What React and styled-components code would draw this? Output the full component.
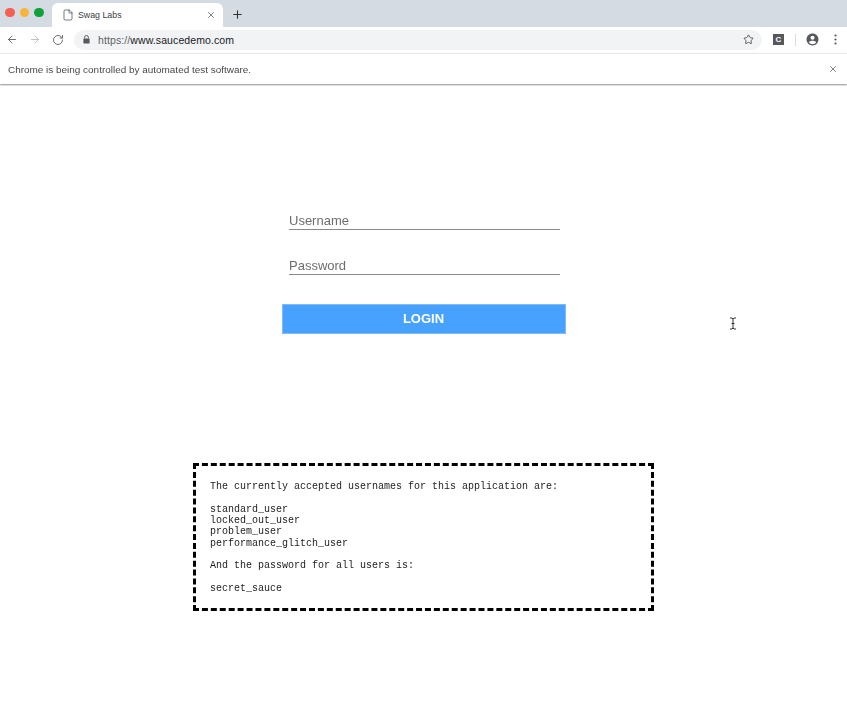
import React from "react";
import styled, { createGlobalStyle } from "styled-components";
import { ArrowLeft, ArrowRight, RotateCw, Star, X, Plus, File } from "lucide-react";

const GlobalStyle = createGlobalStyle`
    html, body {
        margin: 0;
        padding: 0;
        background-color: #ffffff;
    }
    body {
        font-family: "Liberation Sans", Arial, sans-serif;
    }
`

const Page = styled.div`
    position: relative;
    width: 847px;
    height: 715px;
    overflow: hidden;
    display: flex;
    flex-direction: column;
    filter: blur(0.3px);
`

const TabStrip = styled.div`
    display: flex;
    align-items: flex-end;
    height: 27px;
    background-color: #d5dbe2;
`
const Lights = styled.div`
    display: flex;
    gap: 5px;
    align-self: flex-start;
    margin: 7.5px 0 0 5px;
    width: 47px;
`
const Light = styled.span`
    width: 9.5px;
    height: 9.5px;
    border-radius: 50%;
    background-color: ${(props) => props.color};
`
const Tab = styled.div`
    display: flex;
    align-items: center;
    width: 171px;
    height: 24px;
    padding: 0 7px 0 10px;
    box-sizing: border-box;
    border-radius: 6px 6px 0 0;
    background-color: #ffffff;
    color: #3c4043;
    font-size: 8.8px;
`
const TabTitle = styled.span`
    flex: 1;
    margin-left: 4px;
`
const NewTab = styled.div`
    display: flex;
    align-self: center;
    margin: 2px 0 0 8px;
    color: #2f3236;
`

const Toolbar = styled.div`
    display: flex;
    align-items: center;
    height: 25px;
    padding: 0 7px 0 6px;
    background-color: #ffffff;
`
const NavButton = styled.div`
    display: flex;
    width: 12px;
    margin-right: ${(props) => props.gap}px;
    color: ${(props) => props.color};
`
const AddressBar = styled.div`
    display: flex;
    align-items: center;
    width: 688px;
    height: 20px;
    margin-left: 10px;
    padding: 0 8px 0 9px;
    box-sizing: border-box;
    border-radius: 10px;
    background-color: #f1f3f4;
    font-size: 10.5px;
`
const Url = styled.div`
    flex: 1;
    margin-left: 8px;
    color: #5f6368;
    letter-spacing: 0.1px;
`
const Host = styled.span`
    color: #202124;
`
const ExtensionIcon = styled.div`
    display: flex;
    align-items: center;
    justify-content: center;
    width: 11px;
    height: 11px;
    margin-left: 11px;
    background-color: #55585c;
    color: #ffffff;
    font-size: 8px;
    font-weight: bold;
`
const Divider = styled.div`
    width: 1px;
    height: 12px;
    margin: 0 10px 0 11px;
    background-color: #dadce0;
`
const MenuDots = styled.svg`
    margin-left: 15px;
`

const InfoBar = styled.div`
    display: flex;
    align-items: center;
    justify-content: space-between;
    height: 31px;
    margin-top: 1px;
    padding: 0 9px 0 8px;
    border-top: 1px solid #e8eaed;
    box-sizing: border-box;
    background-color: #ffffff;
    box-shadow: 0 1px 1.5px #8d8f91;
    color: #45484c;
    font-size: 9.95px;
`
const CloseBar = styled.div`
    display: flex;
    color: #55585c;
`

const Content = styled.main`
    display: flex;
    flex-direction: column;
    align-items: center;
    padding-top: 126px;
`
const LoginForm = styled.form`
    display: flex;
    flex-direction: column;
    align-items: center;
    width: 284px;
`
const Field = styled.input`
    width: 271px;
    height: 20px;
    margin: 0 0 25px 2px;
    padding: 2px 0 0 0;
    box-sizing: border-box;
    border: none;
    border-bottom: 1px solid #8a8a8a;
    border-radius: 0;
    outline: none;
    background: transparent;
    font-family: "Liberation Sans", Arial, sans-serif;
    font-size: 13px;

    &::placeholder {
        color: #6e6e6e;
        opacity: 1;
    }
`
const LoginButton = styled.button`
    width: 284px;
    height: 30px;
    margin-top: 4px;
    padding: 0 0 2px;
    border: 1px solid #7fbcf5;
    background-color: #47a1ff;
    color: #ffffff;
    font-family: "Liberation Sans", Arial, sans-serif;
    font-size: 13px;
    font-weight: bold;
`

const Credentials = styled.pre`
    width: 461px;
    height: 148px;
    margin: 129px 0 0;
    padding: 15px 0 0 14px;
    box-sizing: border-box;
    border: 3px dashed #000000;
    color: #1c1c1c;
    font-family: "Liberation Mono", "Courier New", monospace;
    font-size: 10px;
    line-height: 11.35px;
`

const TextCursor = styled.svg`
    position: absolute;
    left: 729px;
    top: 317px;
`

const credentials = `The currently accepted usernames for this application are:

standard_user
locked_out_user
problem_user
performance_glitch_user

And the password for all users is:

secret_sauce`

function App() {
    return (
        <Page>
            <GlobalStyle />
            <TabStrip>
                <Lights>
                    <Light color="#f4604f" />
                    <Light color="#f6b53a" />
                    <Light color="#12a03c" />
                </Lights>
                <Tab>
                    <File size={12} strokeWidth={1.6} color="#55585c" />
                    <TabTitle>Swag Labs</TabTitle>
                    <X size={10} strokeWidth={1.8} color="#55585c" />
                </Tab>
                <NewTab>
                    <Plus size={13} strokeWidth={2} />
                </NewTab>
            </TabStrip>
            <Toolbar>
                <NavButton color="#55585c" gap={11}><ArrowLeft size={13} strokeWidth={1.7} /></NavButton>
                <NavButton color="#b4b7bb" gap={11}><ArrowRight size={13} strokeWidth={1.7} /></NavButton>
                <NavButton color="#55585c" gap={0}><RotateCw size={12} strokeWidth={1.7} /></NavButton>
                <AddressBar>
                    <svg width="7" height="9" viewBox="0 0 7 9">
                        <path d="M1.6 3.5V2.4a1.9 1.9 0 0 1 3.8 0v1.1" fill="none" stroke="#55585c" strokeWidth="1" />
                        <rect x="0.4" y="3.5" width="6.2" height="5" rx="0.6" fill="#55585c" />
                    </svg>
                    <Url>https://<Host>www.saucedemo.com</Host></Url>
                    <Star size={11} strokeWidth={1.8} color="#45484c" />
                </AddressBar>
                <ExtensionIcon>C</ExtensionIcon>
                <Divider />
                <svg width="13" height="13" viewBox="0 0 24 24">
                    <path fill="#55585c" d="M12 1C5.9 1 1 5.9 1 12s4.9 11 11 11 11-4.9 11-11S18.1 1 12 1zm0 4a3.8 3.8 0 1 1 0 7.6A3.8 3.8 0 0 1 12 5zm0 15.6c-2.9 0-5.4-1.4-6.9-3.6 1-1.8 4.6-2.8 6.9-2.8s5.9 1 6.9 2.800c-1.500 2.200-4 3.600-6.900 3.600z" />
                </svg>
                <MenuDots width="3" height="11" viewBox="0 0 3 11">
                    <circle cx="1.5" cy="1.5" r="1.1" fill="#55585c" />
                    <circle cx="1.5" cy="5.5" r="1.1" fill="#55585c" />
                    <circle cx="1.5" cy="9.5" r="1.1" fill="#55585c" />
                </MenuDots>
            </Toolbar>
            <InfoBar>
                Chrome is being controlled by automated test software.
                <CloseBar><X size={10} strokeWidth={1.8} /></CloseBar>
            </InfoBar>
            <Content>
                <LoginForm>
                    <Field placeholder="Username" />
                    <Field placeholder="Password" />
                    <LoginButton type="button">LOGIN</LoginButton>
                </LoginForm>
                <Credentials>{credentials}</Credentials>
            </Content>
            <TextCursor width="8" height="13" viewBox="0 0 8 13">
                <path d="M1 1h2l1 1 1-1h2M4 2v9M1 12h2l1-1 1 1h2M2.5 6.5h3" fill="none" stroke="#333333" strokeWidth="1" />
            </TextCursor>
        </Page>
    )
}

export default App
